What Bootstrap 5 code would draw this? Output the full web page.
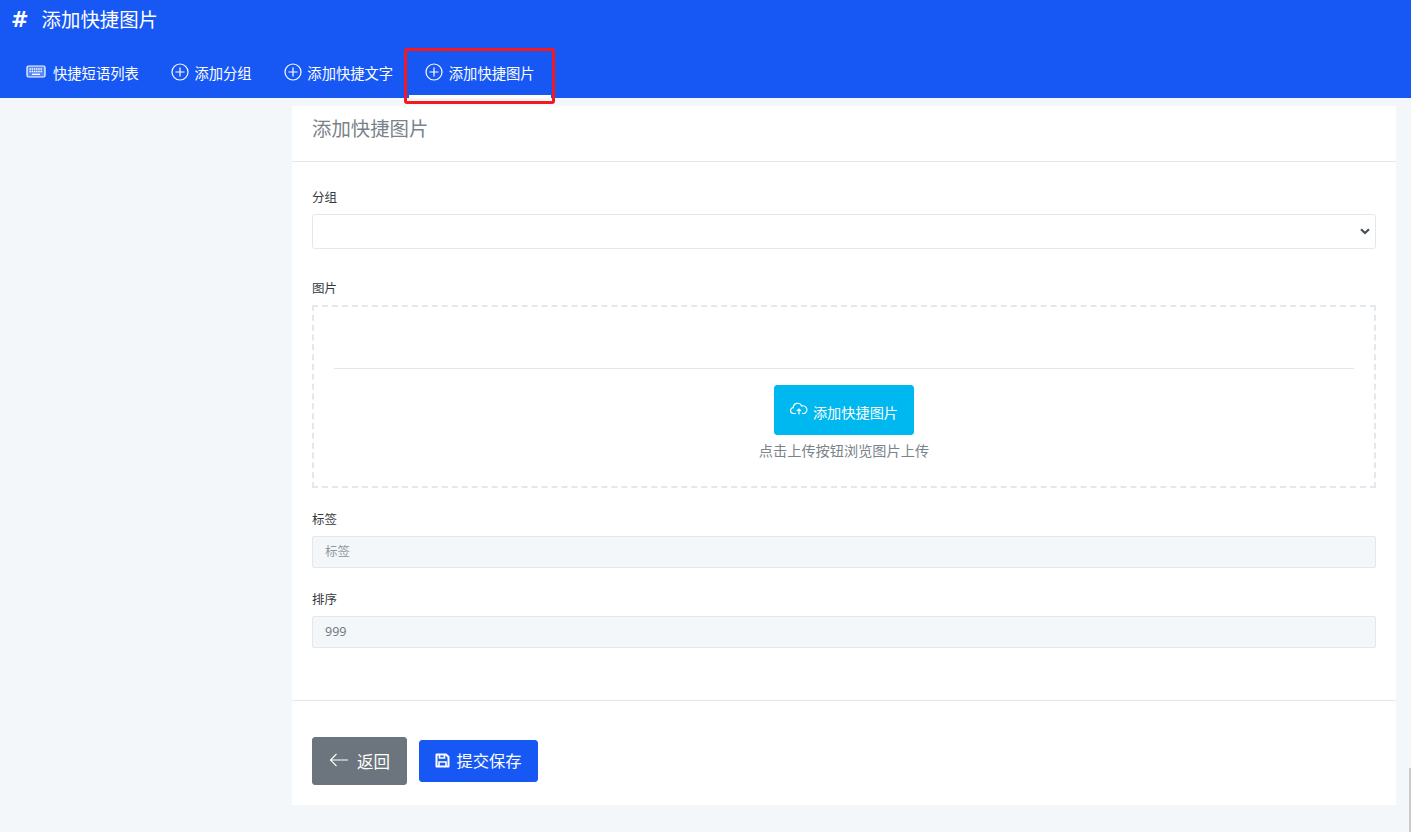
<!DOCTYPE html>
<html lang="zh">
<head>
    <meta charset="UTF-8" />
    <meta name="viewport" content="width=device-width, initial-scale=1" />
    <title>添加快捷图片</title>
    <link href="https://cdn.jsdelivr.net/npm/bootstrap@5.3.3/dist/css/bootstrap.min.css" rel="stylesheet" />
    <style>
        html, body {
            height: 100%;
        }

        body {
            background: #f4f7fa;
            font-family: "Open Sans", "Noto Sans CJK SC", sans-serif;
            font-size: 13px;
            color: #495057;
            overflow: hidden;
        }

        .top-bar {
            background: #1758f5;
            height: 98px;
            color: #fff;
        }

        .top-title {
            height: 48px;
            padding: 0 11px 8px;
            font-size: 19.4px;
            gap: 13px;
        }

        .top-title b {
            font-size: 21px;
            font-family: "DejaVu Sans", sans-serif;
            line-height: 1;
        }

        .tab-row {
            height: 50px;
            padding-left: 10px;
        }

        .tab-item {
            position: relative;
            height: 50px;
            padding: 3px 16.2px 0 16px;
            color: #fff;
            text-decoration: none;
            gap: 5.5px;
            font-size: 14.3px;
            line-height: 1;
        }

        .tab-item svg {
            margin-top: -5px;
        }

        .kbd-icon {
            margin-right: 1.5px;
        }

        .tab-item.is-on {
            box-shadow: inset 0 -3px 0 #fff;
        }

        .red-box {
            position: absolute;
            left: -5px;
            right: -4px;
            top: 0;
            bottom: -6px;
            border: 3px solid #f5181d;
            border-radius: 3px;
        }

        .page-main {
            padding: 8px 15px 0 292px;
        }

        .form-panel {
            height: 699px;
            border: 0;
            border-radius: 0;
        }

        .form-panel .card-header {
            height: 56px;
            padding: 0 20px 10px;
            background: #fff;
            border-color: #e3e6ea;
            border-radius: 0;
            font-size: 19.4px;
            color: #7b838a;
        }

        .form-panel .card-body {
            padding: 28px 20px 0;
            flex: none;
            height: 538px;
        }

        .form-panel .card-footer {
            padding: 36px 20px 0;
            background: #fff;
            border-color: #e3e6ea;
            border-radius: 0;
            flex: 1;
        }

        .field-label {
            font-size: 12.5px;
            color: #343a40;
            line-height: 16px;
            margin-bottom: 8px;
        }

        .form-panel .form-select {
            height: 35px;
            border-color: #e2e8f0;
            border-radius: 3px;
            background-image: url("data:image/svg+xml,%3csvg xmlns='http://www.w3.org/2000/svg' viewBox='0 0 10 7'%3e%3cpath fill='none' stroke='%23495057' stroke-width='2.2' d='M1 1.2 5 5l4-3.8'/%3e%3c/svg%3e");
            background-position: right 5px center;
            background-size: 10px 7px;
        }

        .form-panel .form-control {
            height: 32px;
            font-size: 12.5px;
            padding: 0 12px 1px;
            background: #f4f7fa;
            border-color: #e2e8f0;
            border-radius: 2px;
            color: #6c757d;
        }

        .form-panel .form-control::placeholder {
            color: #8f979e;
        }

        .upload-box {
            height: 183px;
            border: 2px dashed #e2e8ee;
            padding: 0 20px;
            color: #7b838a;
            font-size: 14.2px;
        }

        .upload-list {
            height: 62px;
            border-bottom: 1px solid #e3e6ea;
            margin-bottom: 16px;
        }

        .upload-btn {
            width: 140px;
            height: 50px;
            padding: 5px 0 0;
            background: #00b8f0;
            border-color: #00b8f0;
            color: #fff;
            font-size: 14.2px;
            border-radius: 3px;
            gap: 5px;
        }

        .upload-btn svg {
            margin-top: -7px;
        }

        .upload-tip {
            margin-top: 5px;
        }

        .back-btn {
            width: 95px;
            height: 48px;
            padding: 2px 0 0;
            background: #6c757d;
            border-color: #6c757d;
            font-size: 16.5px;
            border-radius: 3px;
            gap: 9px;
        }

        .back-btn svg {
            margin-top: -4px;
        }

        .save-btn {
            width: 119px;
            height: 42px;
            margin: 3px 0 0 4px;
            background: #1758f5;
            border-color: #1758f5;
            font-size: 16.3px;
            border-radius: 3px;
            gap: 6px;
        }

        .save-btn svg {
            margin-top: -2px;
        }

        .scroll-thumb {
            position: fixed;
            right: 0;
            bottom: 0;
            width: 2px;
            height: 64px;
            background: #c9cbce;
        }
    </style>
</head>
<body>

    <header class="top-bar">
        <div class="top-title d-flex align-items-center">
            <b>#</b>
            <span>添加快捷图片</span>
        </div>
        <nav class="tab-row d-flex">
            <a href="#" class="tab-item d-flex align-items-center">
                <svg width="20" height="14" viewBox="0 0 20 14" fill="none" stroke="#fff" class="kbd-icon">
                    <rect x="1" y="1" width="18" height="11" rx="1.5" fill="#cfe0ff" fill-opacity=".35" stroke-width="1.2" />
                    <path d="M3.5 4h13M3.5 6.5h13" stroke-width="1.3" stroke-dasharray="1.4 .8" />
                    <path d="M6 9.3h8" stroke-width="1.3" />
                </svg>
                快捷短语列表
            </a>
            <a href="#" class="tab-item d-flex align-items-center">
                <svg width="18" height="18" viewBox="0 0 18 18" fill="none" stroke="#fff" stroke-width="1.2">
                    <circle cx="9" cy="9" r="8" />
                    <path d="M9 4.5v9M4.5 9h9" />
                </svg>
                添加分组
            </a>
            <a href="#" class="tab-item d-flex align-items-center">
                <svg width="18" height="18" viewBox="0 0 18 18" fill="none" stroke="#fff" stroke-width="1.2">
                    <circle cx="9" cy="9" r="8" />
                    <path d="M9 4.5v9M4.5 9h9" />
                </svg>
                添加快捷文字
            </a>
            <a href="#" class="tab-item is-on d-flex align-items-center">
                <svg width="18" height="18" viewBox="0 0 18 18" fill="none" stroke="#fff" stroke-width="1.2">
                    <circle cx="9" cy="9" r="8" />
                    <path d="M9 4.5v9M4.5 9h9" />
                </svg>
                添加快捷图片
                <span class="red-box"></span>
            </a>
        </nav>
    </header>

    <main class="page-main">
        <div class="card form-panel">
            <div class="card-header d-flex align-items-center">添加快捷图片</div>
            <div class="card-body">
                <div class="field-label">分组</div>
                <select class="form-select mb-4 pb-1"></select>
                <div class="field-label mt-4 pt-2">图片</div>
                <div class="upload-box text-center mb-4">
                    <div class="upload-list"></div>
                    <button type="button" class="btn upload-btn d-inline-flex align-items-center justify-content-center">
                        <svg width="18" height="14" viewBox="0 0 18 14" fill="none" stroke="#fff" stroke-width="1.2">
                            <path d="M6 11.5H3.6a2.9 2.9 0 0 1-.3-5.8A4.3 4.3 0 0 1 11.6 4a3.8 3.8 0 0 1 2.6 7.5H12" />
                            <path d="M9 12.5V7M7 9l2-2 2 2" />
                        </svg>
                        添加快捷图片
                    </button>
                    <div class="upload-tip">点击上传按钮浏览图片上传</div>
                </div>
                <div class="field-label">标签</div>
                <input type="text" class="form-control mb-4" placeholder="标签" readonly />
                <div class="field-label">排序</div>
                <input type="text" class="form-control" value="999" readonly />
            </div>
            <div class="card-footer d-flex align-items-start gap-2">
                <a href="#" class="btn btn-secondary back-btn d-flex align-items-center justify-content-center">
                    <svg width="19" height="14" viewBox="0 0 19 14" fill="none" stroke="#fff" stroke-width="1.1">
                        <path d="M19 7H1.5M7.5 1 1.5 7l6 6" />
                    </svg>
                    返回
                </a>
                <button type="button" class="btn btn-primary save-btn d-flex align-items-center justify-content-center">
                    <svg width="15" height="15" viewBox="0 0 15 15" fill="none" stroke="#fff" stroke-width="2">
                        <path d="M1.5 1.5h9.5l2.5 2.5v9.5h-12z" stroke-linejoin="round" />
                        <path d="M4.5 1.5v3.5h5V1.5M4 13.5V9h7v4.5" stroke-width="1.6" />
                    </svg>
                    提交保存
                </button>
            </div>
        </div>
    </main>

    <div class="scroll-thumb"></div>

    <script src="https://cdn.jsdelivr.net/npm/bootstrap@5.3.3/dist/js/bootstrap.bundle.min.js"></script>
</body>
</html>
